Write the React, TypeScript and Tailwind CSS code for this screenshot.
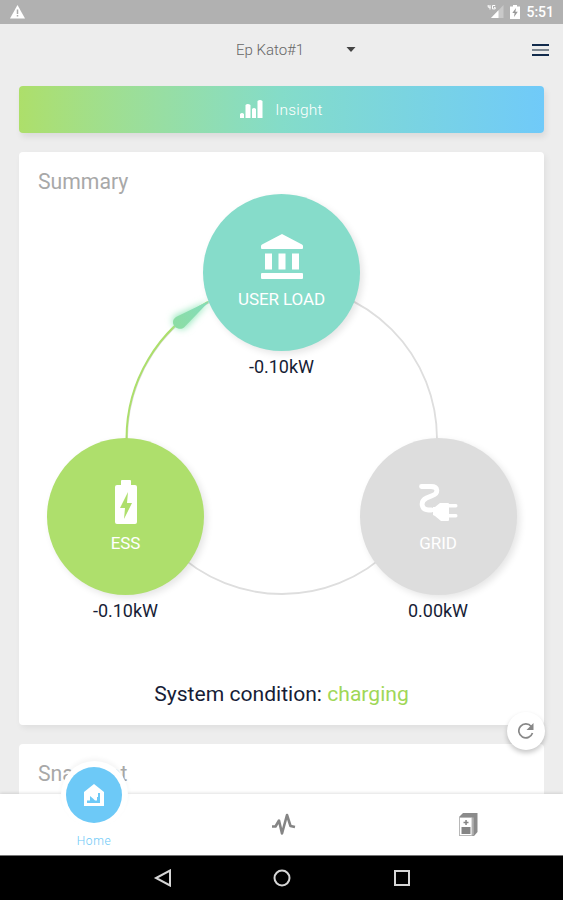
import { ReactNode } from "react";
import { clsx } from "clsx";

interface PowerNodeProps {
  label: string;
  value: string;
  className: string;
  circleClassName: string;
  children: ReactNode;
}

// Round power source / consumer with its reading underneath
function PowerNode({ label, value, className, circleClassName, children }: PowerNodeProps) {
  return (
    <div className={clsx("absolute flex w-[157px] flex-col items-center", className)}>
      <div
        className={clsx(
          "flex h-[157px] w-[157px] flex-col items-center pt-[39px] text-white",
          "rounded-full shadow-[3px_3px_7px_rgba(0,0,0,0.1)]",
          circleClassName
        )}
      >
        {children}
        <span className="mt-[9px] text-[17px] leading-5 tracking-[-0.1px]">{label}</span>
      </div>
      <span className="mt-[5px] text-[18px] leading-[22px] text-[#171d36]">{value}</span>
    </div>
  );
}

function StatusBar() {
  return (
    <div className="flex h-[23.5px] shrink-0 items-center justify-between bg-[#b1b1b1] pr-[9px] pl-[10px] text-white">
      <svg width="15" height="14" viewBox="0 0 15 14" className="mt-px">
        <path d="M7.5 0L15 13.5H0z" fill="currentColor" />
        <path d="M7.5 4.5v4.5M7.5 10v1.6" stroke="#aaa" strokeWidth="1.5" />
      </svg>
      <div className="flex items-center">
        <svg width="17" height="15" viewBox="0 0 17 15">
          <path d="M16.5 1v13H4z" fill="#c9c9c9" />
          <path d="M11.5 6.3V14H4z" fill="currentColor" />
          <path d="M1.2 1v2.2h2.4M3 1v4.5M8.2 1.5H5.5v3.4h2.7V3.4H7" fill="none" stroke="currentColor" />
        </svg>
        <svg width="10" height="14" viewBox="0 0 10 14" className="ml-[6px]">
          <path d="M3 0h4v1.5h3V14H0V1.5h3z" fill="currentColor" />
          <path d="M6 3L2.3 8h2.3L4 12l3.8-5.2H5.4z" fill="#999" />
        </svg>
        <span className="mt-px ml-[6px] text-[14px] leading-4 font-medium">5:51</span>
      </div>
    </div>
  );
}

function TopBar() {
  return (
    <header className="flex h-[62px] shrink-0 items-start justify-between pt-[16px] pr-[14px] pl-[236px]">
      <button className="flex items-center text-[15px] leading-5 font-light text-[#666]">
        <span className="w-[110px] text-left">Ep Kato#1</span>
        <svg width="10" height="5" viewBox="0 0 10 5">
          <path d="M0.500 0h9L5 5z" fill="#444" />
        </svg>
      </button>
      <svg width="17" height="12" viewBox="0 0 17 12" className="mt-[4px]">
        <path d="M0 1h17M0 11h17" stroke="#122b4c" strokeWidth="2" />
        <path d="M0 6h17" stroke="#7c8791" strokeWidth="2" />
      </svg>
    </header>
  );
}

function SummaryCard() {
  return (
    <section className="relative h-[573px] shrink-0 rounded-[4px] bg-white shadow-[2px_3px_6px_rgba(0,0,0,0.06)]">
      <h2 className="pt-[17px] pl-[19px] text-[21.2px] leading-[26px] text-[#a8a8a8]">Summary</h2>

      <svg width="525" height="573" viewBox="0 0 525 573" fill="none" className="absolute inset-0">
        <defs>
          <linearGradient id="arrow" x1="155" y1="173" x2="191" y2="149" gradientUnits="userSpaceOnUse">
            <stop stopColor="#8cdda4" />
            <stop offset="1" stopColor="#84dcbc" />
          </linearGradient>
          <filter id="glow" x="-50%" y="-50%" width="200%" height="200%">
            <feGaussianBlur stdDeviation="3.5" />
          </filter>
        </defs>
        <circle cx="263" cy="287" r="155" stroke="#dedede" strokeWidth="1.800" />
        <path d="M107.500 287A155.500 155.500 0 0 1 189 150" stroke="#acdf6b" strokeWidth="2" />
        <path d="M155 164L191 149L167 176C160 180 150 172 155 164z" fill="#98e8bd" filter="url(#glow)" />
        <path d="M157 165L191 148.500L165 175.500C161 179 153.500 175 154 170C154 168 155 166.500 157 165z" fill="url(#arrow)" />
      </svg>

      <PowerNode label="USER LOAD" value="-0.10kW" className="top-[42px] left-[184px]" circleClassName="bg-[#86dcca]">
        <svg width="42" height="47" viewBox="0 0 42 47" fill="currentColor">
          <path d="M21 1L41 11.500Q42 12 42 13v2q0 1-1 1H1q-1 0-1-1v-2q0-1 1-1.500zM4 20.500h7v16H4zM17.500 20.500h7v16h-7zM31 20.500h7v16h-7zM1 40h40q1 0 1 1v4q0 1-1 1H1q-1 0-1-1v-4q0-1 1-1z" />
        </svg>
      </PowerNode>
      <PowerNode label="ESS" value="-0.10kW" className="top-[286px] left-[28px]" circleClassName="bg-[#aedf6c]">
        <svg width="24" height="47" viewBox="0 0 24 47">
          <path d="M7 4q0-1 1-1h8q1 0 1 1v4h4q2 0 2 2v35q0 2-2 2H3q-2 0-2-2V10q0-2 2-2h4z" fill="currentColor" />
          <path d="M14 15L6 31h5l-1 11 8-16h-5z" fill="#aedf6c" />
        </svg>
      </PowerNode>
      <PowerNode label="GRID" value="0.00kW" className="top-[286px] left-[340.5px]" circleClassName="bg-[#dddddd]">
        <svg width="40" height="47" viewBox="0 0 40 47" fill="none">
          <path d="M3.500 9.500H13c7.500 0 7.500 7 1.500 9l-6 2.500c-7 3.500-5 12 2 12h3" stroke="currentColor" strokeWidth="4.800" strokeLinecap="round" />
          <path d="M15 30l2 0 5-4h8q1 0 1 1v16q0 1-1 1h-7l-6-5-2-1zM31 27h7q1.500 0 1.500 1.700T38 30.500h-7zM31 37h7q1.500 0 1.500 1.700T38 40.500h-7z" fill="currentColor" />
        </svg>
      </PowerNode>

      <p className="absolute inset-x-0 bottom-[17px] text-center text-[21.1px] leading-7 text-[#171d36]">
        System condition: <span className="text-[#a0d757]">charging</span>
      </p>

      <button className="absolute -right-px -bottom-[25px] z-10 flex h-[38px] w-[38px] items-center justify-center rounded-full bg-white shadow-[0_3px_5px_rgba(0,0,0,0.22)]">
        <svg width="16" height="16" viewBox="0 0 16 16" fill="none">
          <path d="M13.300 3.500A7 7 0 1 0 14.500 10" stroke="#888" strokeWidth="1.700" />
          <path d="M15.500 0v7h-7z" fill="#888" />
        </svg>
      </button>
    </section>
  );
}

function TabBar() {
  return (
    <nav className="relative z-10 flex h-[61px] shrink-0 bg-white shadow-[0_-1px_3px_rgba(0,0,0,0.12)]">
      <a className="flex w-[188px] flex-col items-center">
        <div className="-mt-[33px] flex h-[67px] w-[67px] items-center justify-center rounded-full bg-white shadow-[0_-3px_4px_rgba(0,0,0,0.04)]">
          <div className="flex h-[56px] w-[56px] items-center justify-center rounded-full bg-[#6dc9f7]">
            <svg width="20" height="22" viewBox="0 0 20 22">
              <path d="M10 0l10 8v14H0V8z" fill="white" />
              <path d="M3 19v-2.500h3V12l3 2.500 2 2h2V13h1V9h2v10z" fill="#6dc9f7" />
            </svg>
          </div>
        </div>
        <span className="mt-[5px] text-[12px] leading-4 font-light tracking-[0.6px] text-[#6dc9f7]">Home</span>
      </a>
      <a className="flex w-[191px] items-start justify-center pt-[18px]">
        <svg width="25" height="24" viewBox="0 0 25 24" fill="none" className="text-[#858585]">
          <path d="M1 14.500h3.500L8 8.500l3 13L16 3l3.500 11 4.500 1" stroke="currentColor" strokeWidth="2.600" strokeLinejoin="round" />
        </svg>
      </a>
      <a className="flex flex-1 items-start justify-center pt-[19px] pr-[5px]">
        <svg width="19" height="23" viewBox="0 0 19 23">
          <path d="M4 0h14.500v19L15 23H0V4z" fill="#8b8b8b" />
          <path d="M14 4.500V22.500" stroke="#c4c4c4" />
          <path d="M0.500 4.500h12.500v18H0.500z" fill="white" stroke="#b8b8b8" />
          <path d="M2.500 14h9v7h-9zM6.300 7h1.500v1.800h1.700v1.500H7.800v1.700H6.300v-1.700H4.500V8.800h1.800z" fill="#858585" />
        </svg>
      </a>
    </nav>
  );
}

function SystemNav() {
  return (
    <div className="flex h-[45px] shrink-0 items-center justify-center gap-[102px] border-t border-[#777] bg-black">
      <svg width="18" height="18" viewBox="0 0 18 18" fill="none" stroke="#d6d6d6" strokeWidth="2">
        <path d="M17 1.500v15L3 9z" />
      </svg>
      <svg width="18" height="18" viewBox="0 0 18 18" fill="none" stroke="#d6d6d6" strokeWidth="2">
        <circle cx="9" cy="9" r="7.500" />
      </svg>
      <svg width="18" height="18" viewBox="0 0 18 18" fill="none" stroke="#d6d6d6" strokeWidth="2">
        <rect x="2" y="2" width="14" height="14" />
      </svg>
    </div>
  );
}

export default function App() {
  return (
    <div className="flex h-[900px] w-[563px] flex-col overflow-hidden bg-[#ededed] font-[Roboto,sans-serif]">
      <StatusBar />
      <TopBar />
      <main className="flex min-h-0 flex-1 flex-col px-[19px]">
        <button className="flex h-[47px] shrink-0 items-center justify-center rounded-[4px] bg-linear-to-r from-[#addf6a] via-[#84dcc9] to-[#70caf9] text-[15.5px] font-light text-white shadow-[2px_4px_6px_rgba(0,0,0,0.08)]">
          <svg width="23" height="19" viewBox="0 0 23 19" fill="currentColor" className="mt-px">
            <path d="M0 14q2-2 4 0v4H0zM5.500 5q2-2 5 0v13h-5zM12 9q2-2 4 0v9h-4zM17.500 1q2.500-2 5 0v17h-5z" />
          </svg>
          <span className="mt-[3px] ml-[12px] tracking-[0.2px]">Insight</span>
        </button>
        <div className="mt-[19px] flex flex-col gap-[19px]">
          <SummaryCard />
          <section className="h-[120px] shrink-0 rounded-[4px] bg-white">
            <h2 className="pt-[17px] pl-[19px] text-[21.2px] leading-[26px] text-[#a8a8a8]">Snapshot</h2>
          </section>
        </div>
      </main>
      <TabBar />
      <SystemNav />
    </div>
  );
}
